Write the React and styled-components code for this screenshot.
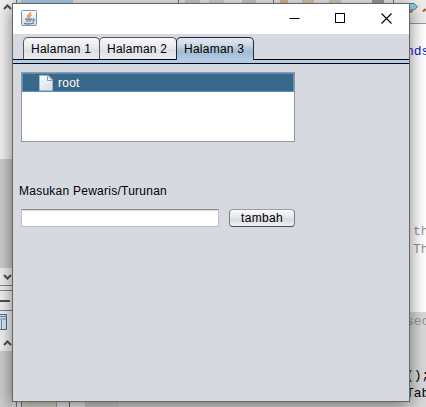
import React from "react";
import styled, { createGlobalStyle } from "styled-components";

const Global = createGlobalStyle`
  * { box-sizing: border-box; }
  body { margin: 0; overflow: hidden; font-family: "Liberation Sans", Arial, sans-serif; font-size: 12px; letter-spacing: 0.25px; color: #000; }
`;

const Desktop = styled.div`
  width: 426px;
  height: 407px;
  overflow: hidden;
  display: grid;
  grid-template-columns: 12px 398px 16px;
  grid-template-rows: 3px 399px 5px;
  background: #ececec;
`;

const Rail = styled.div`
  grid-column: 1;
  grid-row: 1 / 4;
  display: flex;
  flex-direction: column;
  background: #cdcdcd;
`;

const RailBlock = styled.div`
  flex: none;
  height: ${(p) => p.$h}px;
  background: ${(p) => p.$bg || "#f2f2f2"};
  border-bottom: ${(p) => (p.$line ? "1px solid #85858f" : "0")};
  svg { display: block; }
`;

const Strip = styled.div`
  grid-column: 2;
  grid-row: ${(p) => p.$row};
  display: flex;
  background: ${(p) => p.$bg};
`;

const Piece = styled.div`
  flex: none;
  width: ${(p) => p.$w}px;
  background: ${(p) => p.$c};
`;

const Editor = styled.div`
  grid-column: 3;
  grid-row: 1 / 4;
  display: flex;
  flex-direction: column;
  background: linear-gradient(#fff 0 312px, #d9d9d9 312px);
`;

const EditorToolbar = styled.div`
  flex: none;
  height: 24px;
  margin-bottom: 19px;
  background: #ededed;
  border-bottom: 1px solid #8b9bb5;
  svg { display: block; }
`;

const CodeLine = styled.div`
  flex: none;
  height: 18px;
  line-height: 18px;
  margin-left: ${(p) => p.$x || 0}px;
  white-space: pre;
  font-family: "Liberation Mono", "Courier New", monospace;
  font-size: 13px;
  letter-spacing: 0;
  color: ${(p) => p.$c || "#000"};
`;

const Window = styled.div`
  grid-column: 2;
  grid-row: 2;
  z-index: 1;
  display: flex;
  flex-direction: column;
  border: 1px solid #646567;
  background: #d6d9e0;
  box-shadow: 0 4px 16px rgba(0, 0, 0, 0.5);
`;

const TitleBar = styled.div`
  flex: none;
  height: 30px;
  background: #fff;
  display: flex;
  align-items: flex-start;
  justify-content: space-between;
  padding: 6px 17px 0 8px;
`;

const Controls = styled.div`
  display: flex;
  gap: 35px;
  padding-top: 3px;
  svg { display: block; }
`;

const TabBar = styled.div`
  flex: none;
  height: 30px;
  display: flex;
  padding: 3px 0 0 10px;
  background: linear-gradient(#03050c, #03050c) 0 25px / 100% 1px no-repeat,
    linear-gradient(#b5cce7, #b5cce7) 0 26px / 100% 3px no-repeat,
    linear-gradient(#03050c, #03050c) 0 29px / 100% 1px no-repeat;
`;

const Tab = styled.div`
  flex: none;
  width: ${(p) => p.$w || 78}px;
  height: ${(p) => (p.$active ? 23 : 22)}px;
  margin-right: -1px;
  padding-left: 7px;
  border: 1px solid ${(p) => (p.$active ? "#1d2940" : "#555860")};
  border-bottom: 0;
  border-radius: 5px 5px 0 0;
  background: ${(p) =>
    p.$active
      ? "linear-gradient(#e2eaf1 0, #c9d6e1 35%, #a9bfd2 55%, #a6bdd2 70%, #b5cce7)"
      : "linear-gradient(#f8f8fa, #e7e8ec 50%, #dedfe5 55%, #eaebef)"};
  line-height: 23px;
  white-space: nowrap;
`;

const Content = styled.div`
  flex: 1;
  padding: 8px 0 0 8px;
`;

const Tree = styled.div`
  width: 274px;
  height: 70px;
  border: 1px solid #9297a1;
  background: #fff;
`;

const TreeRow = styled.div`
  height: 19px;
  display: flex;
  align-items: center;
  padding-left: 16px;
  gap: 4px;
  line-height: 19px;
  background: #39698a;
  border: 1px solid #5b8fbd;
  color: #fff;
  svg { display: block; }
`;

const RowText = styled.span`
  padding-top: 2px;
`;

const Label = styled.div`
  height: 16px;
  line-height: 16px;
  margin: 41px 0 0 -2px;
`;

const Form = styled.div`
  display: flex;
  gap: 10px;
  margin-top: 10px;
`;

const Field = styled.input`
  width: 198px;
  height: 18px;
  padding: 0 5px;
  border: 1px solid #babcc0;
  border-top-color: #8d8e91;
  border-radius: 0;
  outline: 0;
  background: #fff;
  box-shadow: inset 0 1px #dadbdd;
`;

const Button = styled.button`
  width: 66px;
  height: 18px;
  padding: 1px 0 0;
  border: 1px solid #797d85;
  border-top-color: #989ba2;
  border-bottom-color: #4c4f57;
  border-radius: 4px;
  background: linear-gradient(#fafafb, #e6e8eb 45%, #d7dade 60%, #f3f4f6);
  font: 12px/15px "Liberation Sans", Arial, sans-serif;
  letter-spacing: 0.3px;
  color: #000;
`;

const Chevron = ({ up }) => (
  <svg width="12" height="14" viewBox="0 0 12 14">
    <path d={up ? "M4 9L7.5 5.5L11 9" : "M4 7L7.5 10.5L11 7"} fill="none" stroke="#515151" strokeWidth="2" />
  </svg>
);

const JavaIcon = () => (
  <svg width="16" height="16" viewBox="0 0 16 16">
    <defs>
      <linearGradient id="cupTile" x2="0" y2="1">
        <stop offset="0" stopColor="#fff" />
        <stop offset="1" stopColor="#d3dce4" />
      </linearGradient>
    </defs>
    <rect x=".5" y=".5" width="15" height="15" rx="1" fill="url(#cupTile)" stroke="#7892a8" />
    <path d="M9.7 2.2C10 4 6.2 4.5 6.7 6.3C7 7.3 8 7.5 7.7 8.5M10.5 4.8C8.3 5.6 8.8 6.5 9.3 7.2" fill="none" stroke="#ed7d2b" strokeWidth="1.4" />
    <path d="M4 9.2H11M5 11H10.3M3.2 13.3C6 14.1 10 14 13 13M11.3 9.2C14.2 8.7 13.8 11 11.4 11.5" fill="none" stroke="#527897" strokeWidth="1.2" />
  </svg>
);

const PageIcon = () => (
  <svg width="15" height="16" viewBox="0 0 15 16">
    <defs>
      <linearGradient id="sheet" x1="0.2" x2="0.8" y2="1">
        <stop offset="0" stopColor="#f6f9fc" />
        <stop offset="1" stopColor="#d5e0eb" />
      </linearGradient>
    </defs>
    <path d="M.5 .5H9.5L13.5 4.5V15.5H.5Z" fill="url(#sheet)" stroke="#aeb7bf" />
    <path d="M8.5 1V5.5H13.5L9.3 1Z" fill="#eff4f8" stroke="#7d96a9" strokeWidth=".9" />
  </svg>
);

const codeLines = [
  { text: "nds", x: -4, c: "#1414d8" },
  {}, {}, {}, {}, {}, {}, {}, {}, {},
  { text: "th", x: 3, c: "#969696" },
  { text: "Th", x: 3, c: "#969696" },
  {}, {}, {},
  { text: "sec", x: -4, c: "#969696" },
  {}, {},
  { text: "();", x: -4 },
  { text: "Tab", x: -4 },
];

export default function App() {
  return (
    <>
      <Global />
      <Desktop>
        <Rail>
          <RailBlock $h={159}><Chevron up /></RailBlock>
          <RailBlock $h={109} $bg="#cdcdcd" />
          <RailBlock $h={18} $line><Chevron /></RailBlock>
          <RailBlock $h={5} $line />
          <RailBlock $h={20} $line>
            <svg width="12" height="19"><path d="M0 10H10" stroke="#515151" strokeWidth="2" /></svg>
          </RailBlock>
          <RailBlock $h={40}>
            <svg width="12" height="40">
              <path d="M-2 3.5H6.5V18.5H-2Z" fill="#dbe8f2" stroke="#416d8f" />
              <path d="M0 5.5H7M0 8H7M1.5 9V18" stroke="#6289a6" />
              <path d="M4 34L7.5 30.5L11 34" fill="none" stroke="#515151" strokeWidth="2" />
            </svg>
          </RailBlock>
        </Rail>

        <Strip $row={1} $bg="#e8e8e8">
          <Piece $w={4} $c="#ececec" />
          <Piece $w={1} $c="#777985" />
          <Piece $w={4} $c="#ddd" />
          <Piece $w={52} $c="#a9cdee" />
          <Piece $w={105} $c="#e8e8e8" />
          <Piece $w={1} $c="#777" />
          <Piece $w={6} $c="#e8e8e8" />
          <Piece $w={15} $c="#c9c9c9" />
          <Piece $w={9} $c="#e8e8e8" />
          <Piece $w={15} $c="#d3d0cc" />
          <Piece $w={18} $c="#e8e8e8" />
          <Piece $w={14} $c="#c9c9c9" />
          <Piece $w={17} $c="#e8e8e8" />
          <Piece $w={1} $c="#777" />
          <Piece $w={6} $c="#e8e8e8" />
          <Piece $w={8} $c="#d4b795" />
          <Piece $w={14} $c="#e8e8e8" />
          <Piece $w={12} $c="#d8c5ae" />
          <Piece $w={15} $c="#e8e8e8" />
          <Piece $w={12} $c="#d8c5ae" />
          <Piece $w={31} $c="#e8e8e8" />
          <Piece $w={12} $c="#999" />
          <Piece $w={9} $c="#e8e8e8" />
          <Piece $w={1} $c="#777" />
        </Strip>

        <Window>
          <TitleBar>
            <JavaIcon />
            <Controls>
              <svg width="11" height="11"><path d="M.5 5.5H10.5" stroke="#000" /></svg>
              <svg width="11" height="11"><rect x=".5" y=".5" width="9" height="9" fill="none" stroke="#000" /></svg>
              <svg width="11" height="11"><path d="M.5 .5L10.5 10.5M10.5 .5L.5 10.5" stroke="#000" strokeWidth="1.1" /></svg>
            </Controls>
          </TitleBar>
          <TabBar>
            <Tab $w={77}>Halaman 1</Tab>
            <Tab>Halaman 2</Tab>
            <Tab $active>Halaman 3</Tab>
          </TabBar>
          <Content>
            <Tree>
              <TreeRow><PageIcon /><RowText>root</RowText></TreeRow>
            </Tree>
            <Label>Masukan Pewaris/Turunan</Label>
            <Form>
              <Field type="text" />
              <Button type="button">tambah</Button>
            </Form>
          </Content>
        </Window>

        <Strip $row={3} $bg="#dfdfdf">
          <Piece $w={4} $c="#ddd" />
          <Piece $w={1} $c="#777985" />
          <Piece $w={4} $c="#eee" />
          <Piece $w={1} $c="#777985" />
          <Piece $w={34} $c="#dedfd4" />
          <Piece $w={1} $c="#aaa" />
          <Piece $w={12} $c="#f5f5f5" />
          <Piece $w={1} $c="#666" />
          <Piece $w={15} $c="#f5f5f5" />
          <Piece $w={32} $c="#d5d5d5" />
          <Piece $w={1} $c="#ccc" />
        </Strip>

        <Editor>
          <EditorToolbar>
            <svg width="16" height="22">
              <path d="M-1 3.5H9L12.5 6.8L9 10H-1Z" transform="translate(-5 0)" fill="#91d0dc" stroke="#567f90" />
              <path d="M0 11.5H2.5" stroke="#a65b16" strokeWidth="2" />
              <path d="M15.5 9L13 11.5" stroke="#a65b16" strokeWidth="2" />
            </svg>
          </EditorToolbar>
          {codeLines.map((l, i) => (
            <CodeLine key={i} $x={l.x} $c={l.c}>{l.text || ""}</CodeLine>
          ))}
        </Editor>
      </Desktop>
    </>
  );
}
